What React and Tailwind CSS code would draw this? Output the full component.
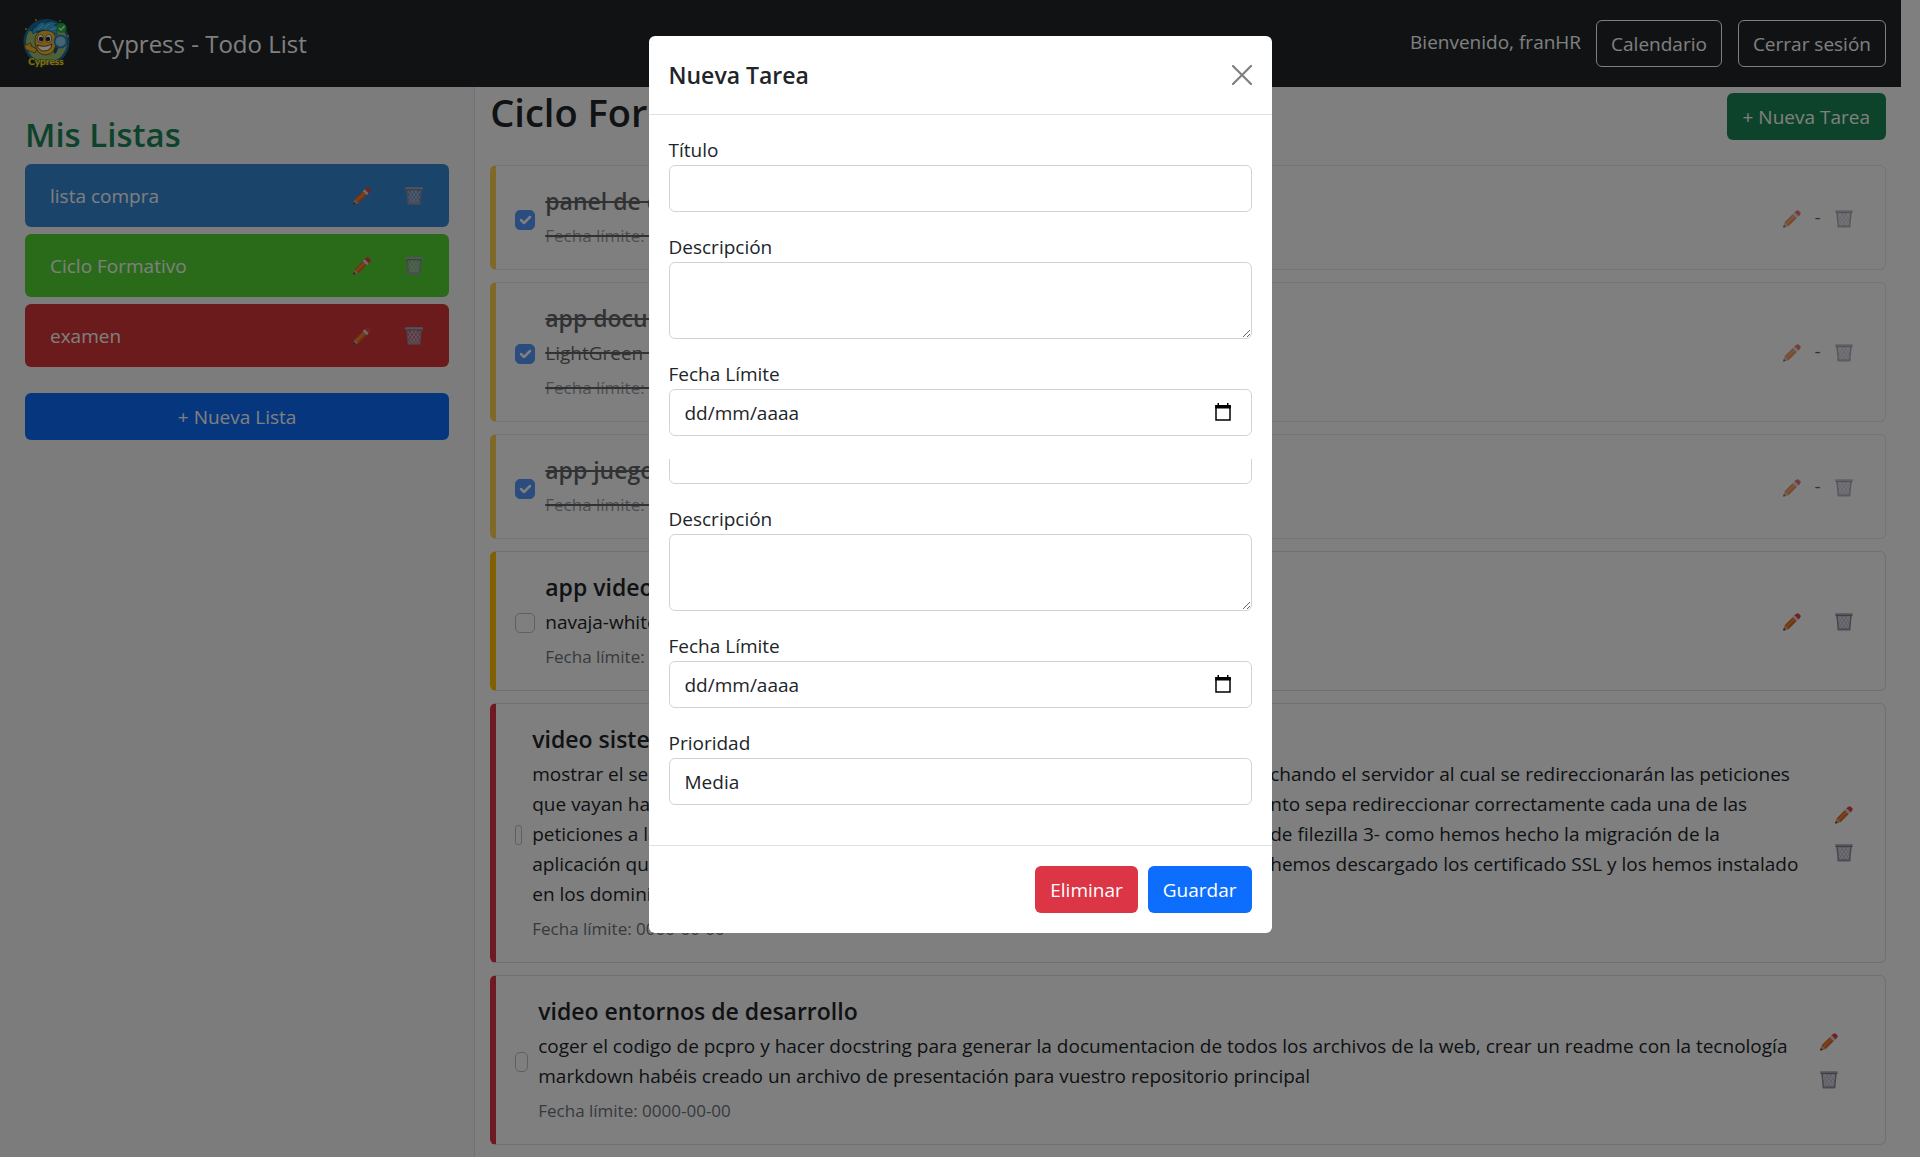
import React from "react";

function Pencil() {
  return (
    <svg viewBox="0 0 18 18" className="h-[18px] w-[18px]" aria-hidden="true">
      <path d="M12.600 1.400 14 .4q.8-.5 1.500 0l1.900 1.800q.7.7.2 1.500l-1 1.500z" fill="#e8443c" />
      <path d="m10.800 3.100 2.400-2.300 4 3.900-2.400 2.400z" fill="#e8443c" />
      <path d="m9.600 4.300 2-2 4 4-2 2z" fill="#d6d6e2" />
      <path d="m1.600 12.300 8-8 4 4-8.100 8z" fill="#e0682a" />
      <path d="m2.600 13.300 8-8 1.500 1.500-8 8z" fill="#f58a35" />
      <path d="m1.600 12.300 3.900 4L.7 17.600q-.6.1-.4-.5z" fill="#d9a376" />
      <path d="m.8 15.100 2 2-2.100.5q-.6.1-.4-.5z" fill="#4b2f3d" />
    </svg>
  );
}

function Trash() {
  return (
    <svg viewBox="0 0 18 18" className="h-[18px] w-[18px]" aria-hidden="true">
      <path d="m1.700 2.200 1.500 14.300h11.600l1.500-14.300z" fill="#a9a7ba" fillOpacity=".35" />
      <g stroke="#bdbccd" strokeWidth="1" fill="none">
        <path d="M3 4l8 12M6 3l8 12M9.500 3l5.500 8M3 9l5 7M15 4l-8 12M12 3l-8 12M8.500 3L3 11M15 9l-5 7" />
      </g>
      <path d="m2 2.500 1.400 13.800M16 2.500l-1.400 13.800" stroke="#8f8ea0" strokeWidth="1.500" fill="none" />
      <path d="M.2.900q0-.6.6-.6h16.400q.6 0 .6.600v1.400q0 .6-.6.600H.8q-.6 0-.6-.6z" fill="#aaa9bb" />
      <path d="M1 2.200h16v1H1z" fill="#72717f" />
      <path d="M2.600 15.300h12.800v1.700q0 .4-.4.400H3q-.4 0-.4-.4z" fill="#9a99aa" />
    </svg>
  );
}

function Logo() {
  return (
    <svg viewBox="0 0 50 52" className="h-[52px] w-[50px]" role="img" aria-label="Cypress">
      <circle cx="24.500" cy="24" r="23" fill="#1b6f9e" />
      <circle cx="24.500" cy="24" r="20.500" fill="#9cc274" />
      <path d="M7 13q7-10 15-11 9-1 14 5l-6 7-14 1z" fill="#176a9a" />
      <circle cx="4" cy="11" r="1" fill="#8fc43c" />
      <circle cx="14" cy="2" r="1" fill="#d99a2e" />
      <circle cx="38" cy="3" r="1" fill="#4fae3c" />
      <circle cx="46" cy="18" r="1" fill="#c9b83c" />
      <path d="M3 28q-1-3 2-1l3-2q2 0 1 3l6 3-2 4-8-3q-3-1-2-4z" fill="#f2b52c" stroke="#5b3c12" strokeWidth=".7" />
      <path d="M13 24q-1-11 11-12 10 0 10 11 0 13-10 14-10 0-11-13z" fill="#f5bd28" stroke="#5b3c12" strokeWidth=".8" />
      <path d="M11 16q-2-4 3-7 4-6 10-5-1 2-2 2 7-5 14 0l-4 1q6 0 8 4l-6 1q2 2 1 5-4-3-7-4-8-2-12 0-3 1-5 3z" fill="#35a8dd" stroke="#155e8a" strokeWidth=".7" />
      <path d="m16 12 5-5M22 11l5-5M28 12l6-2" stroke="#7fd0f0" strokeWidth="1" fill="none" />
      <ellipse cx="18.500" cy="20.500" rx="3.200" ry="4" fill="#fff" stroke="#3b2a18" strokeWidth=".6" />
      <ellipse cx="26.500" cy="20.500" rx="3.200" ry="4" fill="#fff" stroke="#3b2a18" strokeWidth=".6" />
      <circle cx="19" cy="21" r="2.200" fill="#2d2424" />
      <circle cx="26" cy="21" r="2.200" fill="#2d2424" />
      <path d="M15 27q8 3 15-1-1 7-8 7-5 0-7-6z" fill="#fff" stroke="#5b2412" strokeWidth=".8" />
      <path d="m35 29-2 5" stroke="#17507c" strokeWidth="3" strokeLinecap="round" />
      <circle cx="38.500" cy="23.500" r="6" fill="#8fc8e6" stroke="#2c7fb2" strokeWidth="1.800" />
      <circle cx="39.500" cy="10" r="5" fill="#22b33a" />
      <path d="m37 10 2 2 3.500-4" stroke="#eaffea" strokeWidth="1.300" fill="none" />
      <text x="24" y="47" textAnchor="middle" fontFamily="Lato, sans-serif" fontWeight="900" fontSize="10" className="text-[10px]" fill="#f7e02a" stroke="#4a4708" strokeWidth="1" paintOrder="stroke">Cypress</text>
    </svg>
  );
}

const lists = [
  { name: "lista compra", color: "bg-[#3688d6]" },
  { name: "Ciclo Formativo", color: "bg-[#54d634]" },
  { name: "examen", color: "bg-[#d63638]" },
];

const tasks = [
  { title: "panel de control", done: true, level: "media" },
  { title: "app documentos", text: ["LightGreen Medium"], done: true, level: "media" },
  { title: "app juegos", done: true, level: "media" },
  { title: "app video", text: ["navaja-white"], level: "media" },
  {
    title: "video sistemas",
    split: [
      ["mostrar el servidor", "chando el servidor al cual se redireccionarán las peticiones"],
      ["que vayan hacia", "nto sepa redireccionar correctamente cada una de las"],
      ["peticiones a la", "de filezilla 3- como hemos hecho la migración de la"],
      ["aplicación que", "hemos descargado los certificado SSL y los hemos instalado"],
      ["en los dominios", ""],
    ],
    level: "alta",
    box: "w-[7px] rounded-[3px]",
    stacked: "w-[43px]",
  },
  {
    title: "video entornos de desarrollo",
    text: [
      "coger el codigo de pcpro y hacer docstring para generar la documentacion de todos los archivos de la web, crear un readme con la tecnología",
      "markdown habéis creado un archivo de presentación para vuestro repositorio principal",
    ],
    level: "alta",
    box: "w-[13px] rounded-[5px]",
    stacked: "w-[73px]",
  },
];

function IconButton({ label, children }) {
  return (
    <button type="button" aria-label={label} className="flex h-[38px] w-[43px] items-center justify-center">
      {children}
    </button>
  );
}

function Task({ task, index }) {
  const id = "tarea-" + index;
  return (
    <li
      className={
        "flex items-center rounded-md border border-l-[6px] border-[#dfdfdf] bg-white pt-5 pr-5 pb-[18px] pl-[19px] " +
        (task.level === "alta" ? "border-l-[#dc3545] " : "border-l-[#ffc107] ") +
        (task.done ? "opacity-70" : "")
      }
    >
      <span className={"relative mt-0.5 flex h-5 shrink-0 " + (task.box ? "" : "w-5")}>
        <input
          id={id}
          type="checkbox"
          defaultChecked={task.done}
          className={
            "h-5 appearance-none border border-[#bfbfbf] checked:border-[#0d6efd] checked:bg-[#0d6efd] " +
            (task.box || "w-5 rounded-[5px]")
          }
        />
        {task.done && (
          <svg viewBox="0 0 20 20" className="pointer-events-none absolute inset-0" aria-hidden="true">
            <path d="m6 10 3 3 6-6" stroke="#fff" strokeWidth="2.500" fill="none" strokeLinecap="round" strokeLinejoin="round" />
          </svg>
        )}
      </span>
      <div className={"ml-2.5 min-w-0 flex-1 " + (task.done ? "line-through decoration-2" : "")}>
        <label htmlFor={id} className="mb-[5px] block text-[23px]/[30px] font-semibold">{task.title}</label>
        {(task.text || task.split) && (
          <div className="mb-[5px]">
            {task.text && task.text.map((line) => <p key={line} className="whitespace-nowrap">{line}</p>)}
            {task.split && task.split.map(([start, end]) => (
              <p key={start} className="grid grid-cols-[738px_1fr] whitespace-nowrap">
                <span>{start}</span>
                <span>{end}</span>
              </p>
            ))}
          </div>
        )}
        <small className="block text-[17px]/[30px] text-[#6c757d]">Fecha límite: 0000-00-00</small>
      </div>
      <div className={"flex shrink-0 items-center " + (task.stacked ? "flex-col " + task.stacked : "")}>
        <IconButton label="Editar tarea"><Pencil /></IconButton>
        {!task.stacked && <span className="mb-1 w-[9px] text-center">{task.done ? "-" : ""}</span>}
        <IconButton label="Eliminar tarea"><Trash /></IconButton>
      </div>
    </li>
  );
}

const control = "block w-full rounded-md border border-[#ced4da] bg-white px-[15px] text-[#212529]";

function Field({ id, label, children }) {
  return (
    <div>
      <label htmlFor={id} className="block">{label}</label>
      {children}
    </div>
  );
}

function DateField({ id }) {
  return (
    <Field id={id} label="Fecha Límite">
      <div className={"flex h-[47px] items-center justify-between " + control}>
        <input id={id} type="text" defaultValue="dd/mm/aaaa" className="min-w-0 flex-1 bg-transparent outline-none" />
        <button type="button" aria-label="Abrir calendario" className="mr-1 text-black">
          <svg viewBox="0 0 18 20" className="h-5 w-[18px]" aria-hidden="true">
            <path d="M2 3h14v14H2z" fill="none" stroke="currentColor" strokeWidth="1.500" />
            <path d="M1.200 2h15.600v3.500H1.200zM3.500 0h1.500v3h-1.500zM13 0h1.500v3H13z" fill="currentColor" />
          </svg>
        </button>
      </div>
    </Field>
  );
}

function DescriptionField({ id }) {
  return (
    <Field id={id} label="Descripción">
      <textarea id={id} className={"h-[77px] resize-y py-2 " + control} />
    </Field>
  );
}

function Modal() {
  return (
    <div className="fixed inset-0 z-10 flex items-start justify-center overflow-hidden bg-black/50 pt-9">
      <section role="dialog" aria-labelledby="modal-title" className="w-full max-w-[623px] rounded-md bg-white text-[#212529]">
        <header className="flex h-[79px] items-center justify-between border-b border-[#dee2e6] px-5">
          <h2 id="modal-title" className="text-[23px]/[30px] font-semibold">Nueva Tarea</h2>
          <button type="button" aria-label="Cerrar" className="text-[#7f7f7f]">
            <svg viewBox="0 0 20 20" className="h-5 w-5" aria-hidden="true">
              <path d="m1 1 18 18M19 1 1 19" stroke="currentColor" strokeWidth="2.200" strokeLinecap="round" />
            </svg>
          </button>
        </header>
        <form className="flex flex-col gap-5 px-5 pt-5 pb-10">
          <Field id="titulo" label="Título">
            <input id="titulo" type="text" className={"h-[47px] " + control} />
          </Field>
          <DescriptionField id="descripcion" />
          <DateField id="fecha" />
          <div className="mt-[3px] flex h-[25px] items-end overflow-hidden">
            <input type="text" aria-label="Título" className={"h-[47px] shrink-0 " + control} />
          </div>
          <DescriptionField id="descripcion-2" />
          <DateField id="fecha-2" />
          <Field id="prioridad" label="Prioridad">
            <select id="prioridad" defaultValue="Media" className={"h-[47px] appearance-none " + control}>
              <option>Media</option>
            </select>
          </Field>
        </form>
        <footer className="flex justify-end gap-2.5 border-t border-[#dee2e6] p-5 text-white">
          <button type="button" className="h-[47px] rounded-md bg-[#dc3545] px-[15px]">Eliminar</button>
          <button type="button" className="h-[47px] rounded-md bg-[#0d6efd] px-[15px]">Guardar</button>
        </footer>
      </section>
    </div>
  );
}

export default function App() {
  return (
    <div className="h-screen overflow-hidden bg-white font-['Open_Sans',sans-serif] text-[19px]/[30px] text-[#212529]">
      <div className="mr-[19px] flex h-full flex-col">
        <header className="flex h-[87px] shrink-0 items-center bg-[#212529] pr-[15px] pl-[22px] text-white">
          <Logo />
          <h1 className="ml-[25px] text-2xl">Cypress - Todo List</h1>
          <span className="mb-1 ml-auto">Bienvenido, franHR</span>
          <a href="#calendario" className="ml-[15px] flex h-[47px] items-center rounded-md border border-white px-3.5">Calendario</a>
          <a href="#salir" className="ml-4 flex h-[47px] items-center rounded-md border border-white px-3.5">Cerrar sesión</a>
        </header>
        <div className="flex min-h-0 flex-1">
          <aside className="w-1/4 shrink-0 border-r border-[#dee2e6] bg-[#f8f9fa] px-[25px] pt-[26px]">
            <h2 className="mb-2 text-[33px]/[43px] font-semibold text-[#198754]">Mis Listas</h2>
            <ul className="flex flex-col gap-[7px]">
              {lists.map((list) => (
                <li key={list.name} className={"flex h-[63px] items-center rounded-md pr-3.5 pl-[25px] text-white " + list.color}>
                  <span className="flex-1">{list.name}</span>
                  <IconButton label="Editar lista"><Pencil /></IconButton>
                  <span className="w-[9px]" />
                  <IconButton label="Eliminar lista"><Trash /></IconButton>
                </li>
              ))}
            </ul>
            <button type="button" className="mt-[26px] h-[47px] w-full rounded-md bg-[#0d6efd] text-white">+ Nueva Lista</button>
          </aside>
          <main className="min-w-0 flex-1 px-[15px]">
            <div className="flex items-start justify-between pt-1.5">
              <h2 className="text-[38px]/[38px] font-semibold">Ciclo Formativo</h2>
              <button type="button" className="h-[47px] rounded-md bg-[#198754] px-4 text-white">+ Nueva Tarea</button>
            </div>
            <ul className="mt-[25px] flex flex-col gap-3">
              {tasks.map((task, index) => <Task key={task.title} task={task} index={index} />)}
            </ul>
          </main>
        </div>
      </div>
      <Modal />
    </div>
  );
}
